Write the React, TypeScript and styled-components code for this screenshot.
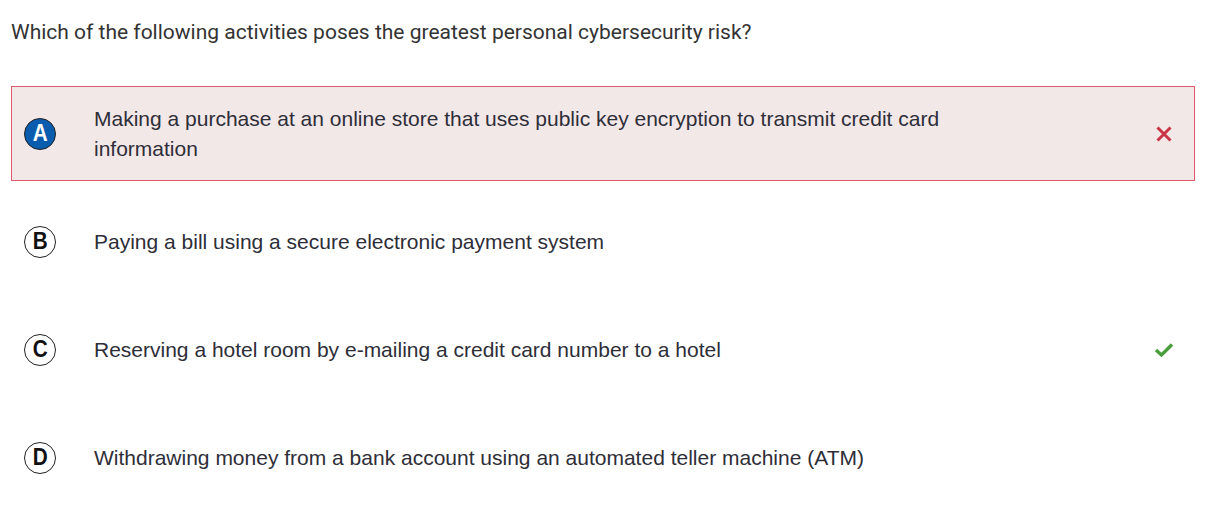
import React from "react";
import styled, { createGlobalStyle } from "styled-components";

const Global = createGlobalStyle`
  html, body { margin: 0; padding: 0; background: #fff; }
`;

const Page = styled.div`
  padding: 12px 30px 0 11px;
  width: 1184px;
`;

const Question = styled.div`
  font-family: Roboto, "Liberation Sans", sans-serif;
  font-size: 21px;
  line-height: 40px;
  color: #333;
  margin-bottom: 34px;
`;

const List = styled.div`
  display: flex;
  flex-direction: column;
  gap: 13px;
`;

const Row = styled.div<{ $wrong?: boolean }>`
  display: flex;
  align-items: center;
  min-height: 95px;
  box-sizing: border-box;
  border: 1px solid ${(p) => (p.$wrong ? "#e0596a" : "transparent")};
  background: ${(p) => (p.$wrong ? "#f3e8e8" : "transparent")};
  padding: 0 19px 0 12px;
`;

const Badge = styled.div<{ $selected?: boolean }>`
  width: 32px;
  height: 32px;
  flex: none;
  border-radius: 50%;
  box-sizing: border-box;
  border: 1px solid #222;
  background: ${(p) => (p.$selected ? "#0a5cae" : "#fff")};
  color: ${(p) => (p.$selected ? "#fff" : "#111")};
  font-family: "Liberation Sans", Arial, sans-serif;
  font-weight: 700;
  font-size: 23px;
  line-height: 1;
  display: flex;
  align-items: center;
  justify-content: center;
  transform-origin: center;
  & > span {
    display: inline-block;
    transform: scaleX(0.9);
  }
`;

const Text = styled.div`
  flex: 1;
  margin-left: 38px;
  max-width: 880px;
  font-family: "Liberation Sans", Arial, sans-serif;
  font-size: 21px;
  line-height: 30px;
  color: #2e2e38;
`;

const Mark = styled.div`
  margin-left: auto;
  width: 22px;
  height: 22px;
  flex: none;
  display: flex;
  align-items: center;
  justify-content: center;
`;

const Cross = () => (
  <svg width="20" height="20" viewBox="0 0 20 20">
    <path d="M3.5 3.5 L16.5 16.5 M16.5 3.5 L3.5 16.5" stroke="#c93447" strokeWidth="3" strokeLinecap="butt" />
  </svg>
);

const Check = () => (
  <svg width="20" height="16" viewBox="0 0 20 16">
    <path d="M2 8 L7.5 13 L18 2.5" stroke="#4a9e3b" strokeWidth="3.4" fill="none" strokeLinejoin="miter" />
  </svg>
);

const options = [
  {
    letter: "A",
    text: "Making a purchase at an online store that uses public key encryption to transmit credit card information",
    selected: true,
    mark: "wrong",
  },
  { letter: "B", text: "Paying a bill using a secure electronic payment system" },
  {
    letter: "C",
    text: "Reserving a hotel room by e-mailing a credit card number to a hotel",
    mark: "right",
  },
  {
    letter: "D",
    text: "Withdrawing money from a bank account using an automated teller machine (ATM)",
  },
];

export default function App() {
  return (
    <>
      <Global />
      <Page>
        <Question>
          Which of the following activities poses the greatest personal cybersecurity risk?
        </Question>
        <List>
          {options.map((o) => (
            <Row key={o.letter} $wrong={o.mark === "wrong"}>
              <Badge $selected={o.selected}>
                <span>{o.letter}</span>
              </Badge>
              <Text>{o.text}</Text>
              <Mark>
                {o.mark === "wrong" && <Cross />}
                {o.mark === "right" && <Check />}
              </Mark>
            </Row>
          ))}
        </List>
      </Page>
    </>
  );
}
